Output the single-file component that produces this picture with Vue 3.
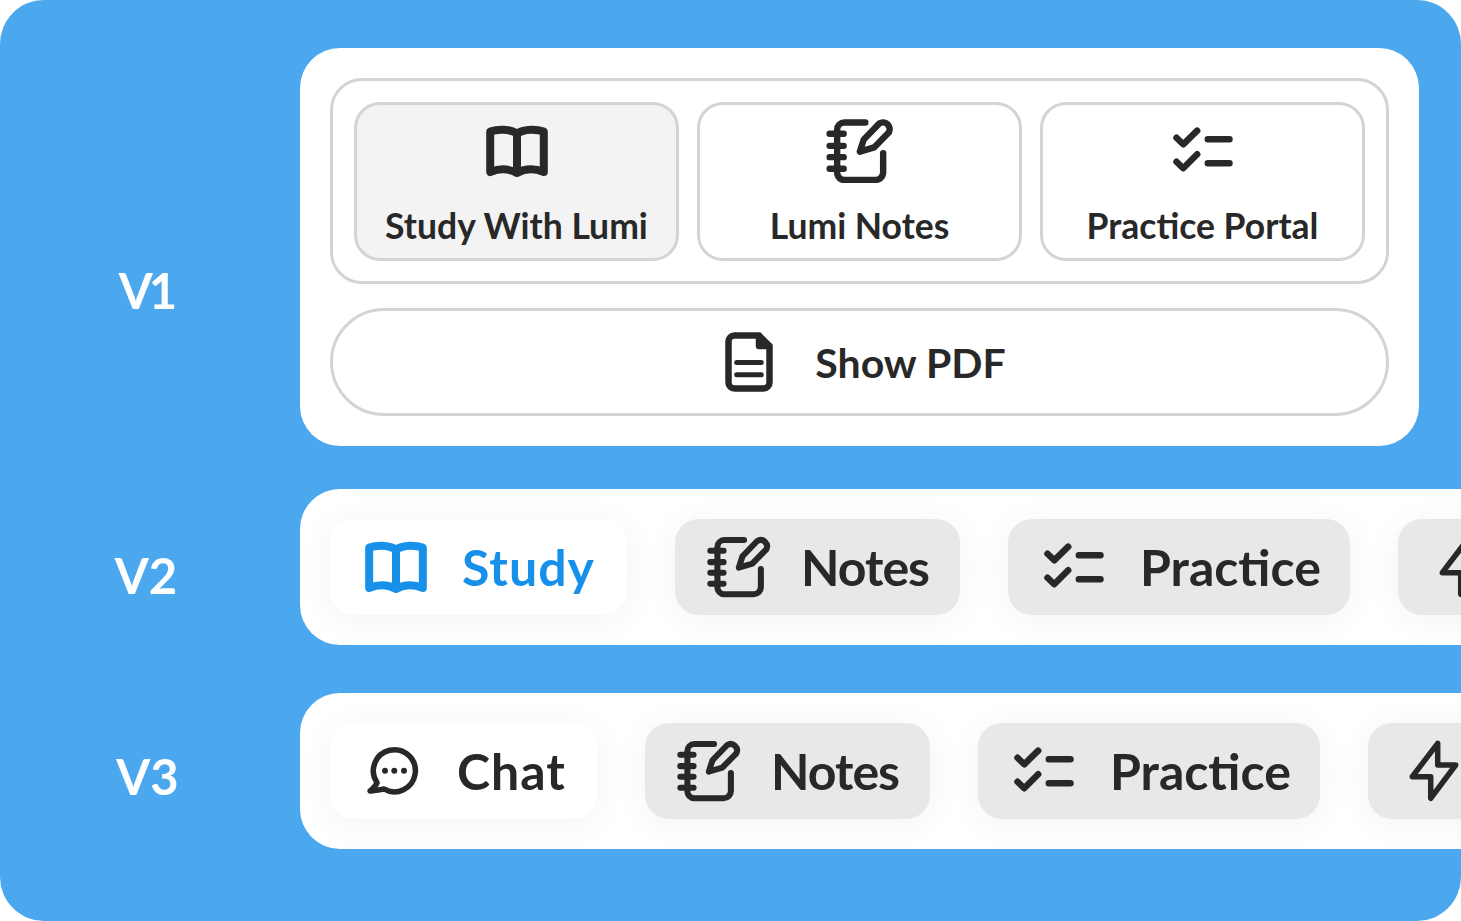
<template>
  <div class="page">
    <svg class="defs" aria-hidden="true">
      <symbol id="i-book" viewBox="0 0 72 72">
        <path d="M9.200 16.500C16.500 14 28 13.500 36 18.500C44 13.500 55.500 14 62.800 16.500V57C54 53.500 44 53.500 36 58C28 53.500 18 53.500 9.200 57ZM36 18.500V58" stroke-width="8" />
      </symbol>
      <symbol id="i-notes" viewBox="-1 -1 74 74">
        <path d="M41.500 6.700H20A7.500 7.500 0 0 0 12.500 14.200V58A7.500 7.500 0 0 0 20 65.700H52A7.800 7.800 0 0 0 59.800 57.900V38.300" stroke-width="6.600" />
        <path d="M4.800 18.300H19.200M4.800 30.700H19.200M4.800 42.300H19.200M4.800 54.300H19.200" stroke-width="6.600" />
        <path d="M35.800 36.700L39.800 24.300L55.800 7.700A7 7 0 0 1 65.800 16.700L50.500 32.300Z" stroke-width="6.600" />
      </symbol>
      <symbol id="i-list" viewBox="0 0 72 72">
        <path d="M9.500 22.700L16.200 29.300L30.200 15.700M9.500 46.700L16.200 53.300L30.200 39.300M40.800 24.300H62.500M40.800 48.300H62.500" stroke-width="6.500" />
      </symbol>
      <symbol id="i-doc" viewBox="0 0 72 72">
        <path d="M46 9.500H21.500A6 6 0 0 0 15.500 15.500V56.500A6 6 0 0 0 21.500 62.500H50.500A6 6 0 0 0 56.500 56.500V20ZM46 9.500V20H56.500" stroke-width="6.500" />
        <path d="M23.700 36.400H48.300M23.700 48.700H48.300" stroke-width="5" stroke-linecap="butt" />
      </symbol>
      <symbol id="i-bolt" viewBox="0 0 72 72">
        <path d="M39.700 8.300V30H57.700L32.700 63.300V41.700H14.300Z" stroke-width="5.500" />
      </symbol>
      <symbol id="i-chat" viewBox="0 0 72 72">
        <path d="M17.100 47.700A21 21 0 1 1 23.800 53.900C20 55 14 55.500 10 56C13 53 16 51 17.100 47.700Z" stroke-width="5.500" />
        <circle cx="25" cy="35.700" r="3" fill="currentColor" stroke="none" />
        <circle cx="34.300" cy="35.700" r="3" fill="currentColor" stroke="none" />
        <circle cx="44" cy="35.700" r="3" fill="currentColor" stroke="none" />
      </symbol>
    </svg>

    <section class="version version-one">
      <div class="version-label">V1</div>
      <div class="card">
        <div class="tab-group">
          <button v-for="tab in tabs" :key="tab.label" class="tab" :class="{ active: tab.active }">
            <svg class="icon"><use :href="`#i-${tab.icon}`" /></svg>
            <span>{{ tab.label }}</span>
          </button>
        </div>
        <button class="pdf-button">
          <svg class="icon"><use href="#i-doc" /></svg>
          <span>Show PDF</span>
        </button>
      </div>
    </section>

    <section v-for="row in rows" :key="row.name" class="version" :class="row.cls">
      <div class="version-label">{{ row.name }}</div>
      <div class="strip">
        <button
          v-for="item in row.items"
          :key="item.icon"
          class="pill"
          :class="[`pill-${item.icon}`, { selected: item.selected, blue: item.blue }]"
        >
          <svg class="icon"><use :href="`#i-${item.icon}`" /></svg>
          <span v-if="item.label">{{ item.label }}</span>
        </button>
      </div>
    </section>
  </div>
</template>

<script setup>
const tabs = [
  { label: 'Study With Lumi', icon: 'book', active: true },
  { label: 'Lumi Notes', icon: 'notes' },
  { label: 'Practice Portal', icon: 'list' },
]

const rows = [
  {
    name: 'V2',
    cls: 'version-two',
    items: [
      { label: 'Study', icon: 'book', selected: true, blue: true },
      { label: 'Notes', icon: 'notes' },
      { label: 'Practice', icon: 'list' },
      { icon: 'bolt' },
    ],
  },
  {
    name: 'V3',
    cls: 'version-three',
    items: [
      { label: 'Chat', icon: 'chat', selected: true },
      { label: 'Notes', icon: 'notes' },
      { label: 'Practice', icon: 'list' },
      { icon: 'bolt' },
    ],
  },
]
</script>

<style>
html, body {
  margin: 0;
  background: #fff;
}
</style>

<style scoped>
.page {
  width: 1461px;
  height: 921px;
  box-sizing: border-box;
  padding-top: 48px;
  background: #4ba8ee;
  border-radius: 44px;
  overflow: hidden;
  color: #282828;
  font-family: Lato, "Liberation Sans", sans-serif;
}

.defs {
  position: absolute;
  width: 0;
  height: 0;
}

.defs path {
  fill: none;
  stroke: currentColor;
  stroke-linecap: round;
  stroke-linejoin: round;
}

.version {
  display: flex;
  align-items: flex-start;
}

.version-two {
  margin-top: 43px;
}

.version-three {
  margin-top: 48px;
}

.version-label {
  flex: 0 0 292px;
  text-align: center;
  color: #fff;
  font-size: 49px;
  font-weight: 700;
  line-height: 60px;
}

.version-one .version-label {
  padding-top: 212px;
  letter-spacing: -4px;
}

.version-two .version-label {
  padding-top: 56px;
}

.version-three .version-label {
  padding-top: 53px;
  padding-left: 3px;
  flex-basis: 289px;
}

.card {
  width: 1119px;
  margin-left: 8px;
  box-sizing: border-box;
  padding: 30px;
  background: #fff;
  border-radius: 40px;
}

.tab-group {
  display: flex;
  gap: 18px;
  box-sizing: border-box;
  height: 206px;
  padding: 21px;
  border: 3px solid #d4d4d4;
  border-radius: 32px;
}

.tab,
.pdf-button,
.pill {
  font: inherit;
  color: inherit;
  background: none;
  padding: 0;
}

.tab {
  flex: 1;
  box-sizing: border-box;
  height: 159px;
  display: flex;
  flex-direction: column;
  align-items: center;
  border: 3px solid #d4d4d4;
  border-radius: 26px;
  font-size: 35.500px;
  font-weight: 700;
  line-height: 44px;
  padding-top: 10px;
}

.tab.active {
  background: #f3f3f3;
}

.tab .icon {
  margin-bottom: 17px;
}

.icon {
  width: 72px;
  height: 72px;
  flex: none;
}

.pdf-button {
  margin-top: 24px;
  width: 100%;
  height: 108px;
  box-sizing: border-box;
  display: flex;
  align-items: center;
  justify-content: center;
  gap: 30px;
  border: 3px solid #d4d4d4;
  border-radius: 54px;
  font-size: 41px;
  font-weight: 700;
}

.strip {
  width: 1300px;
  margin-left: 8px;
  flex: none;
  box-sizing: border-box;
  height: 156px;
  padding: 30px;
  display: flex;
  gap: 48px;
  background: #fff;
  border-radius: 40px;
}

.pill {
  flex: none;
  height: 96px;
  box-sizing: border-box;
  display: flex;
  align-items: center;
  gap: 30px;
  padding-left: 30px;
  border: none;
  border-radius: 24px;
  background: #e8e8e8;
  font-size: 50px;
  font-weight: 700;
  box-shadow: 0 4px 36px rgba(0, 0, 0, 0.05);
  overflow: hidden;
  white-space: nowrap;
}

.pill.selected {
  background: #fff;
}

.pill.blue {
  color: #1790ea;
}

.pill-book {
  width: 297px;
  letter-spacing: 1px;
}

.pill-chat {
  width: 267px;
  gap: 25px;
  letter-spacing: 1px;
}

.pill-notes {
  width: 285px;
  gap: 28px;
  letter-spacing: -1px;
}

.pill-notes .icon {
  width: 68px;
  height: 68px;
}

.pill-list {
  width: 342px;
}

.pill-bolt {
  width: 300px;
}
</style>
